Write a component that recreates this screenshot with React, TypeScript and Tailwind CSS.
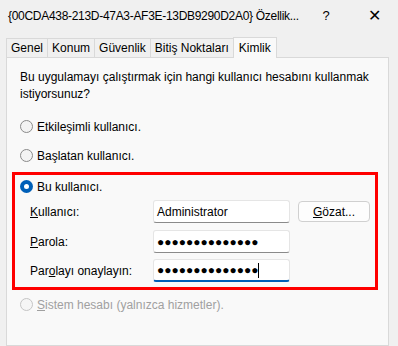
import React from 'react';

const tabs = ['Genel', 'Konum', 'Güvenlik', 'Bitiş Noktaları', 'Kimlik'];

const Radio = ({ checked = false, disabled = false }: { checked?: boolean; disabled?: boolean }) =>
  checked ? (
    <span className="w-[13px] h-[13px] rounded-full bg-[#005fb8] flex items-center justify-center shrink-0">
      <span className="w-[5px] h-[5px] rounded-full bg-white" />
    </span>
  ) : (
    <span
      className={`w-[13px] h-[13px] rounded-full border shrink-0 ${
        disabled ? 'border-[#c5c5c5] bg-[#f5f5f5]' : 'border-[#8a8a8a] bg-[#f3f3f3]'
      }`}
    />
  );

const Field = ({ value, focused = false }: { value: string; focused?: boolean }) => (
  <div
    className={`w-[137px] h-[23px] bg-white rounded-[3px] border border-[#e5e5e5] flex items-center px-[3px] ${
      focused ? 'border-b-2 border-b-[#005fb8]' : 'border-b-[#8a8a8a]'
    }`}
  >
    <span className="text-[12px] text-black leading-none">{value}</span>
    {focused && <span className="w-px h-[15px] bg-black" />}
  </div>
);

const dots = '●●●●●●●●●●●●●●';

export default function App() {
  return (
    <div className="w-[398px] h-[346px] bg-[#f0f0f0] overflow-hidden flex flex-col text-[12px] text-black font-['Segoe_UI','Liberation_Sans',sans-serif]">
      {/* title bar */}
      <div className="h-[31px] flex items-center pl-2 shrink-0">
        <span className="w-[310px] whitespace-nowrap text-[12px] tracking-[-0.3px]">
          {'{00CDA438-213D-47A3-AF3E-13DB9290D2A0} Özellik...'}
        </span>
        <span className="w-[16px] text-center text-[13px]">?</span>
        <span className="w-[32px]" />
        <span className="w-[16px] text-center text-[16px] font-light">✕</span>
      </div>

      {/* tabs */}
      <div className="flex items-end pl-[6px] pt-[5px] h-[26px] shrink-0">
        {tabs.map((t, i) =>
          i === tabs.length - 1 ? (
            <div
              key={t}
              className="h-[21px] px-[5px] bg-[#f9f9f9] border border-[#d9d9d9] border-b-0 -mb-px relative z-10 flex items-start pt-[1px]"
            >
              {t}
            </div>
          ) : (
            <div key={t} className="h-[19px] px-[4px] border border-[#d9d9d9] border-b-0 border-r-0 flex items-center">
              {t}
            </div>
          )
        )}
      </div>

      {/* panel */}
      <div className="flex-1 ml-[6px] mr-[9px] bg-[#f9f9f9] border border-[#d9d9d9] pt-[11px] pl-[13px] pr-[10px]">
        <p className="leading-[17px] pr-2">
          Bu uygulamayı çalıştırmak için hangi kullanıcı hesabını kullanmak istiyorsunuz?
        </p>

        <div className="flex items-center gap-[4px] mt-[15px] h-[17px]">
          <Radio />
          <span>Etkileşimli kullanıcı.</span>
        </div>
        <div className="flex items-center gap-[4px] mt-[12px] h-[17px]">
          <Radio />
          <span>Başlatan kullanıcı.</span>
        </div>

        <div className="-ml-[8px] mt-[8px] w-[366px] h-[118px] border-[3px] border-[#ff0000] pl-[5px] pt-[3px]">
          <div className="flex items-center gap-[4px] h-[17px]">
            <Radio checked />
            <span>Bu kullanıcı.</span>
          </div>
          <div className="flex items-center mt-[5px] pl-[10px]">
            <span className="w-[123px]">
              <u>K</u>ullanıcı:
            </span>
            <Field value="Administrator" />
            <div className="ml-[8px] w-[72px] h-[21px] bg-[#fdfdfd] border border-[#d0d0d0] rounded-[4px] flex items-center justify-center">
              <span>
                <u>G</u>özat...
              </span>
            </div>
          </div>
          <div className="flex items-center mt-[7px] pl-[10px]">
            <span className="w-[123px]">
              <u>P</u>arola:
            </span>
            <Field value={dots} />
          </div>
          <div className="flex items-center mt-[6px] pl-[10px]">
            <span className="w-[123px]">
              Par<u>o</u>layı onaylayın:
            </span>
            <Field value={dots} focused />
          </div>
        </div>

        <div className="flex items-center gap-[4px] mt-[6px] h-[17px] text-[#a0a0a0]">
          <Radio disabled />
          <span>
            <u>S</u>istem hesabı (yalnızca hizmetler).
          </span>
        </div>
      </div>
    </div>
  );
}
